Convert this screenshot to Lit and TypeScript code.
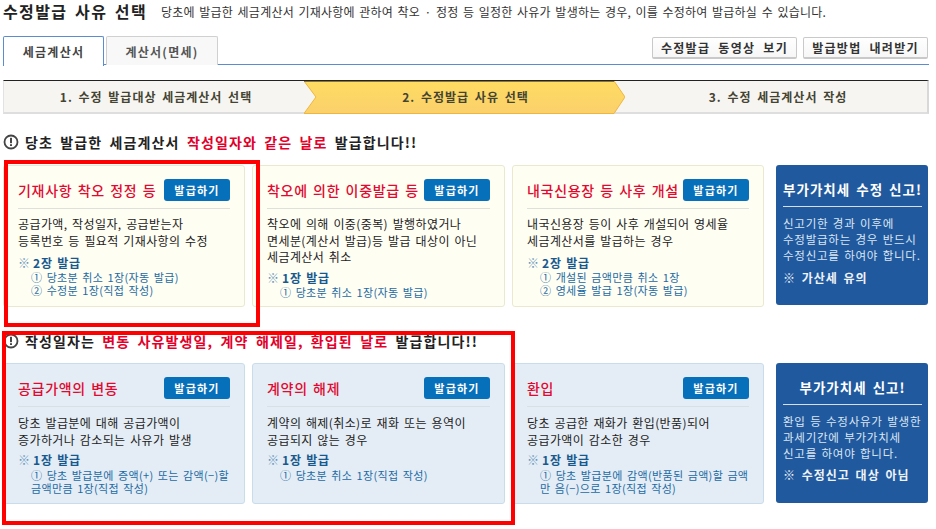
import { LitElement, html, css, svg } from "lit";
import { customElement } from "lit/decorators.js";

interface Card { title: string; body: string[]; count: string; items: string[]; }

const row1: Card[] = [
  { title: "기재사항 착오 정정 등", body: ["공급가액, 작성일자, 공급받는자", "등록번호 등 필요적 기재사항의 수정"], count: "2장 발급", items: ["① 당초분 취소 1장(자동 발급)", "② 수정분 1장(직접 작성)"] },
  { title: "착오에 의한 이중발급 등", body: ["착오에 의해 이중(중복) 발행하였거나", "면세분(계산서 발급)등 발급 대상이 아닌", "세금계산서 취소"], count: "1장 발급", items: ["① 당초분 취소 1장(자동 발급)"] },
  { title: "내국신용장 등 사후 개설", body: ["내국신용장 등이 사후 개설되어 영세율", "세금계산서를 발급하는 경우"], count: "2장 발급", items: ["① 개설된 금액만큼 취소 1장", "② 영세율 발급 1장(자동 발급)"] },
];
const row2: Card[] = [
  { title: "공급가액의 변동", body: ["당초 발급분에 대해 공급가액이", "증가하거나 감소되는 사유가 발생"], count: "1장 발급", items: ["① 당초 발급분에 증액(+) 또는 감액(−)할", "금액만큼 1장(직접 작성)"] },
  { title: "계약의 해제", body: ["계약의 해제(취소)로 재화 또는 용역이", "공급되지 않는 경우"], count: "1장 발급", items: ["① 당초분 취소 1장(직접 작성)"] },
  { title: "환입", body: ["당초 공급한 재화가 환입(반품)되어", "공급가액이 감소한 경우"], count: "1장 발급", items: ["① 당초 발급분에 감액(반품된 금액)할 금액", "만 음(−)으로 1장(직접 작성)"] },
];

const alertIcon = svg`<circle cx="8" cy="8" r="6.5" fill="#fff" stroke="#444" stroke-width="1.8"/><rect x="7.1" y="3.8" width="1.8" height="5.4" fill="#333"/><rect x="7.1" y="10.2" width="1.8" height="1.8" fill="#333"/>`;

@customElement("app-root")
export class AppRoot extends LitElement {
  static styles = css`
    :host {
      display: block; position: relative; width: 936px; height: 529px; overflow: hidden;
      background: #fff; color: #222; box-sizing: border-box; padding: 0 7px 0 3px;
      font-family: "Noto Sans CJK KR", "Noto Sans", sans-serif; font-size: 12px; white-space: nowrap;
    }
    .head { display: flex; align-items: center; height: 22px; }
    h1 { margin: 0; font-size: 16px; font-weight: 700; letter-spacing: 1.4px; color: #222; word-spacing: 2.5px; }
    .desc { margin-left: 14px; font-size: 12px; letter-spacing: 0.22px; word-spacing: 1.6px; color: #333; }
    .tabs { display: flex; align-items: flex-end; margin-top: 14px; height: 28px; border-bottom: 1px solid #5b8ccd; }
    .tab {
      box-sizing: border-box; height: 29px; display: flex; align-items: center; justify-content: center;
      font-weight: 700; font-size: 12px; letter-spacing: 1.25px; color: #444;
      border: 1px solid #d0d0d0; border-bottom: 0; border-radius: 2px 2px 0 0; background: #f8f8f8; margin-bottom: -1px;
    }
    .tab.on { width: 101px; background: #fff; border-color: #5b8ccd; height: 30px; margin-bottom: -1px; align-self: flex-start; }
    .tab.off { width: 112px; margin-left: 2px; height: 29px; align-self: flex-start; color: #555; }
    .actions { margin-left: auto; display: flex; gap: 6px; align-self: flex-start; margin-top: 1px; padding-right: 1px; }
    .btn-line {
      box-sizing: border-box; height: 22px; display: flex; align-items: center; justify-content: center;
      background: linear-gradient(#fff, #f6f6f6); border: 1px solid #c9c9c9; border-bottom-width: 2px; border-radius: 2px;
      font-weight: 700; font-size: 12px; letter-spacing: 1.3px; word-spacing: 4px; color: #333;
    }
    .btn-line.a { width: 145px; }
    .btn-line.b { width: 125px; }
    .steps {
      display: grid; grid-template-columns: 300px 321px 1fr; height: 34px; margin-top: 15px; box-sizing: border-box;
      background: #f7f5f1; border-top: 1px solid #222; border-bottom: 2px solid #dedede; border-right: 2px solid #d8d8d8; border-left: 1px solid #e2e2e2;
    }
    .step { position: relative; box-sizing: border-box; padding-left: 4px; display: flex; align-items: center; justify-content: center; font-weight: 700; font-size: 12px; letter-spacing: 1px; word-spacing: 2px; color: #443; }
    .step.on { padding-left: 2px; }
    .step.on svg { position: absolute; left: 0; top: 0; width: 321px; height: 33px; }
    .step span { position: relative; }
    .alert { display: flex; align-items: center; gap: 6px; height: 20px; font-weight: 700; font-size: 14px; letter-spacing: 1.12px; word-spacing: 3px; color: #222; }
    .alert svg { width: 16px; height: 16px; flex: none; }
    .alert em { font-style: normal; color: #e2002a; }
    .a1 { margin-top: 18px; }
    .a2 { margin-top: 24px; }
    .grid { display: grid; grid-template-columns: 242px 253px 252px 152px; column-gap: 7px; margin-top: 12px; align-items: start; }
    .a1 + .grid { margin-top: 13px; }
    .card { box-sizing: border-box; border-radius: 3px; padding: 13px 14px 0; }
    .r1 { height: 142px; }
    .r2 { height: 141px; }
    .y { background: #fffef3; border: 1px solid #ebe8d0; }
    .g { background: #e4edf5; border: 1px solid #c9dcec; }
    .top { display: flex; align-items: center; justify-content: space-between; height: 22px; padding-bottom: 7px; border-bottom: 1px solid #e0e0da; }
    .g .top { border-bottom-color: #d8e0e6; }
    .title { font-size: 14px; font-weight: 500; letter-spacing: 0.7px; word-spacing: 1.5px; color: #e2082f; }
    .go {
      box-sizing: border-box; width: 66px; height: 22px; display: flex; align-items: center; justify-content: center;
      background: #0770bb; border-radius: 3px; color: #fff; font-weight: 700; font-size: 11px; letter-spacing: 1.2px;
    }
    .body { margin-top: 7px; line-height: 16.5px; font-size: 12px; letter-spacing: 0.4px; word-spacing: 1.5px; color: #222; }
    .r2 .body { margin-top: 8px; }
    .count { margin-top: 6px; height: 15px; line-height: 15px; font-size: 12px; font-weight: 700; letter-spacing: 0.8px; word-spacing: 1px; color: #17598f; }
    .body.l3 + .count { margin-top: 4.4px; }
    .r2 .count { margin-top: 4px; }
    .count i { display: inline-block; width: 15px; font-style: normal; font-weight: 400; letter-spacing: 0; color: #6b97bd; }
    .items { padding-left: 13px; font-size: 11px; line-height: 13px; letter-spacing: 0.34px; word-spacing: 1.5px; color: #1c6aa4; margin-top: 1px; }
    .r2 .items { margin-top: 2px; }
    .blue {
      box-sizing: border-box; margin-left: 5px; width: 152px; height: 140px; border-radius: 3px; background: #21599e;
      color: #fff; padding: 13px 6px 0 7px;
    }
    .blue .bt { height: 22px; padding-bottom: 6px; line-height: 22px; border-bottom: 1px solid #d5dfec; font-size: 13.5px; font-weight: 700; letter-spacing: 1px; word-spacing: 2px; text-align: center; }
    .blue .bb { margin-top: 8px; line-height: 16px; font-size: 11.5px; letter-spacing: 0.75px; word-spacing: 1.2px; color: #dbe6f3; }
    .blue .bn { margin-top: 6px; font-weight: 700; font-size: 12px; letter-spacing: 1px; word-spacing: 2px; color: #eef3fa; }
    .a2 + .grid .blue .bn { margin-top: 5px; }
    .mark { position: absolute; box-sizing: border-box; border: 4px solid #fe0000; pointer-events: none; }
    .m1 { left: 4px; top: 160px; width: 256px; height: 167px; }
    .m2 { left: 2px; top: 331px; width: 513px; height: 194px; }
  `;

  private card(c: Card, cls: string, row: string) {
    return html`<div class="card ${cls} ${row}">
      <div class="top"><span class="title">${c.title}</span><span class="go">발급하기</span></div>
      <div class="body ${c.body.length > 2 ? "l3" : ""}">${c.body.map((b) => html`<div>${b}</div>`)}</div>
      <div class="count"><i>※</i>${c.count}</div>
      <div class="items">${c.items.map((b) => html`<div>${b}</div>`)}</div>
    </div>`;
  }

  private blue(title: string, lines: string[], note: string) {
    return html`<div class="blue">
      <div class="bt">${title}</div>
      <div class="bb">${lines.map((b) => html`<div>${b}</div>`)}</div>
      <div class="bn">${note}</div>
    </div>`;
  }

  render() {
    return html`
      <div class="head">
        <h1>수정발급 사유 선택</h1>
        <span class="desc">당초에 발급한 세금계산서 기재사항에 관하여 착오 · 정정 등 일정한 사유가 발생하는 경우, 이를 수정하여 발급하실 수 있습니다.</span>
      </div>
      <div class="tabs">
        <div class="tab on">세금계산서</div>
        <div class="tab off">계산서(면세)</div>
        <div class="actions">
          <div class="btn-line a">수정발급 동영상 보기</div>
          <div class="btn-line b">발급방법 내려받기</div>
        </div>
      </div>
      <div class="steps">
        <div class="step"><span>1. 수정 발급대상 세금계산서 선택</span></div>
        <div class="step on">
          <svg viewBox="0 0 321 33">
            <defs><linearGradient id="yg" x1="0" y1="0" x2="0" y2="1"><stop offset="0" stop-color="#ffdc61"/><stop offset="1" stop-color="#fad06c"/></linearGradient></defs>
            <path d="M0 0H310L321 16L310 32.5H0L12 16Z" fill="url(#yg)" stroke="#efb63e" stroke-width="1"/>
            <path d="M0 0H310" stroke="#222" stroke-width="1"/>
          </svg>
          <span>2. 수정발급 사유 선택</span>
        </div>
        <div class="step"><span>3. 수정 세금계산서 작성</span></div>
      </div>
      <div class="alert a1">
        <svg viewBox="0 0 16 16">${alertIcon}</svg>
        <span>당초 발급한 세금계산서 <em>작성일자와 같은 날로</em> 발급합니다!!</span>
      </div>
      <div class="grid">
        ${row1.map((c) => this.card(c, "y", "r1"))}
        ${this.blue("부가가치세 수정 신고!", ["신고기한 경과 이후에", "수정발급하는 경우 반드시", "수정신고를 하여야 합니다."], "※ 가산세 유의")}
      </div>
      <div class="alert a2">
        <svg viewBox="0 0 16 16">${alertIcon}</svg>
        <span>작성일자는 <em>변동 사유발생일, 계약 해제일, 환입된 날로</em> 발급합니다!!</span>
      </div>
      <div class="grid">
        ${row2.map((c) => this.card(c, "g", "r2"))}
        ${this.blue("부가가치세 신고!", ["환입 등 수정사유가 발생한", "과세기간에 부가가치세", "신고를 하여야 합니다."], "※ 수정신고 대상 아님")}
      </div>
      <div class="mark m1"></div>
      <div class="mark m2"></div>
    `;
  }
}
